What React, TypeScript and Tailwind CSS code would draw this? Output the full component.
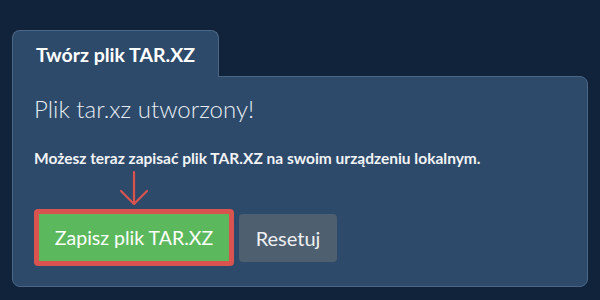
export default function App() {
  return (
    <div className="w-[600px] h-[300px] bg-[#11233a] pt-[30px] pl-[12px] font-['Lato',sans-serif]">
      <div className="w-[576px]">
        {/* tab */}
        <div className="relative z-10 -mb-px w-[207px] h-[47px] rounded-t-lg border border-b-0 border-[#4c6686] bg-[#2d4a6a] pl-[23px] pt-[12px]">
          <h2 className="text-[19.5px] leading-[24px] font-bold text-white">Twórz plik TAR.XZ</h2>
        </div>

        {/* panel */}
        <div className="h-[211px] rounded-b-lg rounded-tr-lg border border-[#4c6686] bg-[#2d4a6a] px-[21px] pt-[16px]">
          <h3 className="text-[24px] leading-[32px] font-light text-[#e7ecf2]">Plik tar.xz utworzony!</h3>
          <p className="mt-[23px] text-[15.5px] leading-[20px] font-bold text-[#f1f3f5]">
            Możesz teraz zapisać plik TAR.XZ na swoim urządzeniu lokalnym.
          </p>

          <div className="mt-[41px] flex items-center gap-[5px]">
            <div className="relative rounded-[4px] bg-[#d9534f] p-[5px]">
              <svg
                className="absolute left-1/2 -translate-x-1/2 -top-[39px]"
                width="30"
                height="37"
                viewBox="0 0 30 37"
                fill="none"
                stroke="#d9534f"
                strokeWidth="2.2"
                strokeLinecap="round"
                strokeLinejoin="round"
              >
                <path d="M15 2 V34" />
                <path d="M2 21 L15 34 L28 21" />
              </svg>
              <button className="block h-[47px] w-[190px] bg-[#5cb85c] text-[19.5px] text-white">
                Zapisz plik TAR.XZ
              </button>
            </div>
            <button className="h-[48px] w-[98px] rounded-[4px] bg-[#4e5f70] text-[20px] text-[#eef0f2]">
              Resetuj
            </button>
          </div>
        </div>
      </div>
    </div>
  );
}
